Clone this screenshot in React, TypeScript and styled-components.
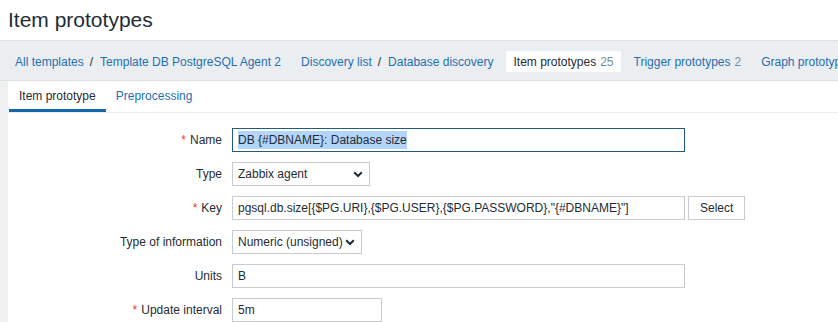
import styled, { createGlobalStyle } from "styled-components";

const GlobalStyle = createGlobalStyle`
  html, body {
    margin: 0;
    padding: 0;
    background: #fff;
  }
  body {
    font-family: "Liberation Sans", Arial, sans-serif;
    font-size: 12px;
    color: #1f2c33;
  }
`;

const Page = styled.div`
  width: 838px;
  height: 322px;
  overflow: hidden;
  background: linear-gradient(to right, #eef0f2 0, #eef0f2 8px, #fff 8px);
`;

const Header = styled.header`
  height: 40px;
  display: flex;
  align-items: center;
  padding: 0 0 1px 8px;
  background: #fff;
  box-sizing: border-box;
`;

const Title = styled.h1`
  margin: 0;
  font-size: 21px;
  font-weight: normal;
  color: #1f2c33;
`;

const Breadcrumbs = styled.nav`
  height: 41px;
  box-sizing: border-box;
  display: flex;
  align-items: center;
  gap: 6px;
  padding: 2px 0 0 8px;
  background: #ebeef0;
  border-top: 1px solid #dde2e5;
  border-bottom: 1px solid #dde2e5;
  white-space: nowrap;
`;

const Crumb = styled.div<{ $current?: boolean }>`
  display: flex;
  align-items: center;
  height: 21px;
  padding: 0 7px;
  background: ${(p) => (p.$current ? "#fff" : "transparent")};
  color: ${(p) => (p.$current ? "#1f2c33" : "#1f6fb0")};
`;

const Sep = styled.span`
  margin: 0 7px 0 6px;
  color: #1f2c33;
`;

const Count = styled.span`
  margin-left: 4px;
  color: #768d99;
`;

const Content = styled.main`
  margin-left: 8px;
  background: #fff;
`;

const TabBar = styled.div`
  display: flex;
  height: 31px;
  border-bottom: 1px solid #ebeef0;
`;

const Tab = styled.div<{ $active?: boolean }>`
  display: flex;
  align-items: center;
  padding: 1px 10px 0 10px;
  color: ${(p) => (p.$active ? "#1f2c33" : "#1f6fb0")};
  border-bottom: 3px solid ${(p) => (p.$active ? "#1366a8" : "transparent")};
  margin-left: ${(p) => (p.$active ? "1px" : "0")};
`;

const Form = styled.div`
  display: grid;
  grid-template-columns: 214px auto;
  column-gap: 10px;
  row-gap: 10px;
  padding-top: 15px;
`;

const Label = styled.div`
  display: flex;
  align-items: center;
  justify-content: flex-end;
  height: 24px;
  white-space: nowrap;
`;

const Required = styled.span`
  color: #e33734;
  margin-right: 4px;
`;

const Field = styled.div`
  display: flex;
  align-items: center;
  gap: 3px;
`;

const Input = styled.div<{ $width: number; $focused?: boolean }>`
  width: ${(p) => p.$width}px;
  height: 24px;
  box-sizing: border-box;
  display: flex;
  align-items: center;
  padding: 0 5px;
  border: 1px solid ${(p) => (p.$focused ? "#255a80" : "#c8ccd0")};
  background: #fff;
  white-space: nowrap;
  overflow: hidden;
`;

const Selected = styled.span`
  background: #b4d5fb;
  padding: 2px 0;
`;

const Select = styled(Input)`
  justify-content: space-between;
  padding-right: 6px;
`;

const Button = styled.div`
  height: 24px;
  box-sizing: border-box;
  display: flex;
  align-items: center;
  padding: 0 11px;
  border: 1px solid #c8ccd0;
  background: #fff;
  color: #1f2c33;
`;

const Chevron = () => (
  <svg width="10" height="7" viewBox="0 0 10 7">
    <path d="M1.2 1.3 L5 5 L8.8 1.3" fill="none" stroke="#1f2c33" strokeWidth="2" />
  </svg>
);

export default function App() {
  return (
    <>
      <GlobalStyle />
      <Page>
        <Header>
          <Title>Item prototypes</Title>
        </Header>
        <Breadcrumbs>
          <Crumb>
            All templates<Sep>/</Sep>Template DB PostgreSQL Agent 2
          </Crumb>
          <Crumb>
            Discovery list<Sep>/</Sep>Database discovery
          </Crumb>
          <Crumb $current>
            Item prototypes<Count>25</Count>
          </Crumb>
          <Crumb>
            Trigger prototypes<Count>2</Count>
          </Crumb>
          <Crumb>Graph prototypes</Crumb>
        </Breadcrumbs>
        <Content>
          <TabBar>
            <Tab $active>Item prototype</Tab>
            <Tab>Preprocessing</Tab>
          </TabBar>
          <Form>
            <Label>
              <Required>*</Required>Name
            </Label>
            <Field>
              <Input $width={453} $focused>
                <Selected>DB {"{#DBNAME}"}: Database size</Selected>
              </Input>
            </Field>

            <Label>Type</Label>
            <Field>
              <Select $width={138}>
                Zabbix agent
                <Chevron />
              </Select>
            </Field>

            <Label>
              <Required>*</Required>Key
            </Label>
            <Field>
              <Input $width={453}>
                pgsql.db.size[{"{$PG.URI}"},{"{$PG.USER}"},{"{$PG.PASSWORD}"},"{"{#DBNAME}"}"]
              </Input>
              <Button>Select</Button>
            </Field>

            <Label>Type of information</Label>
            <Field>
              <Select $width={130}>
                Numeric (unsigned)
                <Chevron />
              </Select>
            </Field>

            <Label>Units</Label>
            <Field>
              <Input $width={453}>B</Input>
            </Field>

            <Label>
              <Required>*</Required>Update interval
            </Label>
            <Field>
              <Input $width={150}>5m</Input>
            </Field>
          </Form>
        </Content>
      </Page>
    </>
  );
}
